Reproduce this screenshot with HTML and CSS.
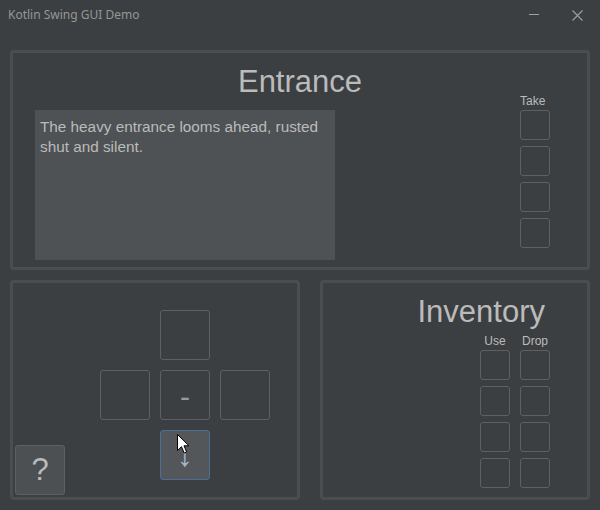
FILE: index.html
```html
<!DOCTYPE html>
<html>
<head>
<meta charset="utf-8">
<link rel="stylesheet" href="styles.css">
</head>
<body>
<div class="window">
  <div class="titlebar">
    <span class="title">Kotlin Swing GUI Demo</span>
    <div class="controls">
      <svg class="min" width="10" height="1" viewBox="0 0 10 1"><rect x="0" y="0" width="10" height="1" fill="#a0a0a0"/></svg>
      <svg class="close" width="11" height="11" viewBox="0 0 11 11"><path d="M0.5 0.5 L10.5 10.5 M10.5 0.5 L0.5 10.5" stroke="#a0a0a0" stroke-width="1.1" fill="none"/></svg>
    </div>
  </div>
  <div class="content">
    <section class="panel room">
      <h1 class="heading room-heading">Entrance</h1>
      <div class="room-body">
        <div class="description">The heavy entrance looms ahead, rusted shut and silent.</div>
        <div class="take-col">
          <div class="col-label take-label">Take</div>
          <button class="slot"></button>
          <button class="slot"></button>
          <button class="slot"></button>
          <button class="slot"></button>
        </div>
      </div>
    </section>
    <div class="bottom-row">
      <section class="panel nav">
        <button class="help">?</button>
        <div class="dpad">
          <span></span><button class="slot big"></button><span></span>
          <button class="slot big"></button><button class="slot big dash">-</button><button class="slot big"></button>
          <span></span><button class="slot big focused">↓</button><span></span>
        </div>
      </section>
      <section class="panel inventory">
        <h2 class="heading inv-heading">Inventory</h2>
        <div class="inv-grid">
          <div class="col-label clip">Use</div><div class="col-label clip">Drop</div>
          <button class="slot"></button><button class="slot"></button>
          <button class="slot"></button><button class="slot"></button>
          <button class="slot"></button><button class="slot"></button>
          <button class="slot"></button><button class="slot"></button>
        </div>
      </section>
    </div>
  </div>
  <svg class="cursor" width="13" height="21" viewBox="0 0 13 21"><path d="M0.5 0.5 L0.5 16.5 L4.5 12.7 L7.2 19 L9.6 18 L7 11.8 L12 11.8 Z" fill="#ffffff" stroke="#000000" stroke-width="1" stroke-linejoin="miter"/></svg>
</div>
</body>
</html>
```

FILE: styles.css
```css
* { box-sizing: border-box; }
html, body { margin: 0; padding: 0; background: #3c3f41; }
.window {
  position: relative;
  width: 600px;
  height: 510px;
  background: #3c3f41;
  font-family: "Liberation Sans", Arial, sans-serif;
  color: #bbbbbb;
  overflow: hidden;
}
.titlebar {
  height: 40px;
  display: flex;
  align-items: flex-start;
}
.title {
  font-family: "Noto Sans", "Open Sans", sans-serif;
  font-size: 12px;
  color: #969696;
  padding: 7px 0 0 8px;
  line-height: 16px;
}
.controls {
  margin-left: auto;
  display: flex;
  align-items: flex-start;
  padding-right: 17px;
}
.controls .min { margin-top: 14px; display: block; }
.controls .close { margin-top: 10px; margin-left: 33px; display: block; }

.content {
  padding: 10px;
  display: flex;
  flex-direction: column;
  gap: 10px;
}
.panel {
  border: 3px solid #4b4e51;
  border-radius: 4px;
  height: 220px;
}
.heading {
  margin: 0;
  font-weight: normal;
  font-size: 31px;
  line-height: 28px;
  color: #bbbbbb;
  white-space: nowrap;
}
.room { padding: 15px 37px 0 22px; }
.room-heading {
  text-align: center;
  margin: 0 -37px -2px -22px;
}
.room-body {
  display: flex;
  justify-content: space-between;
  align-items: flex-start;
}
.description {
  margin-top: 16px;
  width: 300px;
  height: 150px;
  background: #4e5254;
  padding: 7px 5px;
  font-size: 15.3px;
  line-height: 20px;
  color: #bbbbbb;
}
.take-col {
  width: 30px;
  display: flex;
  flex-direction: column;
}
.take-col .col-label { margin-bottom: 2px; }
.take-col .slot + .slot { margin-top: 6px; }
.col-label {
  font-size: 12px;
  line-height: 14px;
  height: 14px;
  text-align: center;
  white-space: nowrap;
  color: #bbbbbb;
  display: flex;
  justify-content: center;
}
.col-label.take-label { justify-content: flex-start; }
.col-label.clip { height: 13px; overflow: hidden; }
.slot {
  width: 30px;
  height: 30px;
  margin: 0;
  padding: 0;
  border: 1px solid #5e6163;
  border-radius: 3px;
  background: transparent;
  font-family: "Liberation Sans", Arial, sans-serif;
  color: #bbbbbb;
}
.bottom-row {
  display: flex;
  gap: 20px;
}
.nav {
  width: 290px;
  display: flex;
  align-items: flex-start;
}
.help {
  align-self: flex-end;
  margin: 0 0 2px 2px;
  width: 50px;
  height: 50px;
  padding: 0;
  background: #4c5052;
  border: 1px solid #5e6163;
  border-radius: 3px;
  font-family: "Liberation Sans", Arial, sans-serif;
  font-size: 31px;
  color: #bbbbbb;
}
.dpad {
  margin: 27px 0 0 35px;
  display: grid;
  grid-template-columns: repeat(3, 50px);
  grid-template-rows: repeat(3, 50px);
  gap: 10px;
}
.slot.big {
  width: 50px;
  height: 50px;
  font-size: 30px;
  line-height: 1;
}
.slot.dash { color: #9a9a9a; padding-top: 3px; }
.slot.focused {
  background: #53575a;
  border-color: #4a6f99;
  color: #a9b7c6;
  font-size: 32px;
}
.inventory {
  width: 270px;
  display: flex;
  flex-direction: column;
  align-items: flex-end;
  padding: 15px 37px 0 0;
}
.inv-heading { margin-right: 5px; }
.inv-grid {
  margin-top: 8px;
  display: grid;
  grid-template-columns: repeat(2, 30px);
  grid-template-rows: 10px repeat(4, 30px);
  column-gap: 10px;
  row-gap: 6px;
}
.cursor {
  position: absolute;
  left: 177px;
  top: 434px;
}
```
